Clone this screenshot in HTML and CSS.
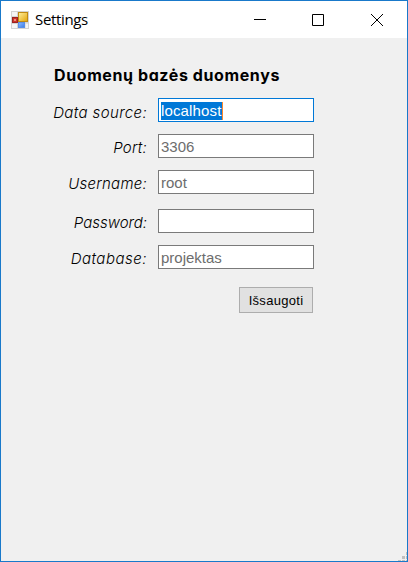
FILE: index.html
```
<!DOCTYPE html>
<html lang="lt">
<head>
<meta charset="utf-8">
<title>Settings</title>
<link rel="stylesheet" href="styles.css">
</head>
<body>
<div class="window">
  <header class="titlebar">
    <svg class="app-icon" width="18" height="18" viewBox="0 0 18 18">
      <defs>
        <linearGradient id="gold" x1="0" y1="0" x2="1" y2="1"><stop offset="0" stop-color="#fff0a0"/><stop offset="1" stop-color="#e2a407"/></linearGradient>
        <linearGradient id="blue" x1="0" y1="0" x2="1" y2="1"><stop offset="0" stop-color="#8dbcff"/><stop offset="1" stop-color="#3a7be8"/></linearGradient>
      </defs>
      <rect width="18" height="18" fill="#d3d3d3"/>
      <path d="M1 1h5v4H1zM1 13h5v4H1zM14.500 12.500h2.500v4.500h-2.500z" fill="#f5f5f5"/>
      <rect x="7.500" y="1.500" width="9" height="9" fill="url(#gold)" stroke="#c08a12"/>
      <rect x="1.500" y="6.500" width="5" height="5" fill="#cc3328" stroke="#9c2020"/>
      <rect x="3" y="8" width="2" height="2" fill="#ee8d7d"/>
      <rect x="7.500" y="11.500" width="6" height="5" fill="url(#blue)" stroke="#5a8fe6"/>
    </svg>
    <h1 class="caption">Settings</h1>
    <svg class="controls" width="138" height="36" viewBox="0 0 138 36" fill="none" stroke="#000">
      <path d="M15 17.500h12"/>
      <path d="M73.500 12.500h11v11h-11z"/>
      <path d="M132 12l12 12M144 12l-12 12"/>
    </svg>
  </header>
  <main class="content">
    <h2 class="heading">Duomenų bazės duomenys</h2>
    <form class="form">
      <label class="name source" for="source">Data source:</label>
      <div class="field active" id="source"><span class="selected">localhost</span></div>
      <label class="name" for="port">Port:</label>
      <div class="field" id="port">3306</div>
      <label class="name" for="user">Username:</label>
      <div class="field" id="user">root</div>
      <label class="name pass" for="password">Password:</label>
      <div class="field" id="password"></div>
      <label class="name data" for="database">Database:</label>
      <div class="field" id="database">projektas</div>
      <button class="save" type="button">Išsaugoti</button>
    </form>
  </main>
  <svg class="grip" width="10" height="9" viewBox="0 0 10 9" fill="#bfbfbf"><path d="M9 0h1v3H9zM5 4h3v3H5zM9 4h1v3H9zM1 8h3v1H1zM5 8h3v1H5zM9 8h1v1H9z"/></svg>
</div>
</body>
</html>
```
FILE: styles.css
```
* { box-sizing: border-box; }
body { margin: 0; }
.window {
  position: relative;
  width: 408px;
  height: 562px;
  border: 1px solid #1979ca;
  background: #f0f0f0;
  overflow: hidden;
}
.titlebar {
  display: flex;
  align-items: center;
  height: 37px;
  padding-left: 10px;
  background: #fff;
}
.caption {
  margin: 0 0 2px 6px;
  font: 400 15px/20px "Open Sans", sans-serif;
  letter-spacing: -0.35px;
}
.controls {
  margin-left: auto;
  margin-right: 30px;
  overflow: visible;
}
.content { padding: 25px 0 0 53px; }
.heading {
  margin: 0;
  height: 35px;
  font: 700 16px/24px Inter, sans-serif;
  font-feature-settings: "cv11";
  letter-spacing: 0.6px;
  white-space: nowrap;
}
.form {
  display: grid;
  grid-template-columns: 93px 156px;
  grid-template-rows: 24px 24px 27px 24px 30px 26px;
  column-gap: 11px;
  row-gap: 12px;
}
.name {
  justify-self: end;
  padding-top: 2px;
  font: italic 300 15px/24px Inter, sans-serif;
  font-feature-settings: "cv11";
  letter-spacing: 0.25px;
  white-space: nowrap;
}
.source { padding-top: 3px; letter-spacing: 0.38px; }
.pass { letter-spacing: 0; }
.data { letter-spacing: 0.5px; }
.field {
  height: 24px;
  padding: 2px;
  border: 1px solid #7a7a7a;
  background: #fff;
  color: #6d6d6d;
  font: 15px/20px "Liberation Sans", sans-serif;
}
.field { line-height: 19px; }
.active { border-color: #0078d7; }
.selected {
  display: inline-block;
  height: 18px;
  line-height: 18px;
  letter-spacing: 0.15px;
  border-right: 1px solid #ff8728;
  background: #0078d7;
  color: #fff;
}
.save {
  grid-column: 2;
  justify-self: end;
  width: 74px;
  height: 26px;
  margin-right: 1px;
  padding: 0;
  border: 1px solid #adadad;
  background: #e1e1e1;
  color: #000;
  font: 13px "Liberation Sans", sans-serif;
  letter-spacing: 0.3px;
}
.grip { position: absolute; right: 0; bottom: 0; }
```
